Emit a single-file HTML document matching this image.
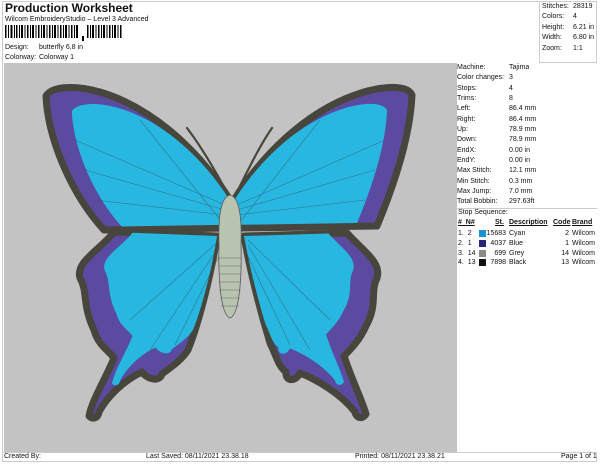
<!DOCTYPE html><html><head><style>
body{margin:0;width:600px;height:464px;background:#fff;font-family:"Liberation Sans",sans-serif;color:#111;position:relative;overflow:hidden}
.a{position:absolute;font-size:7px;white-space:nowrap}
.r{position:absolute;left:0;font-size:7px;white-space:nowrap}
</style></head><body>
<div style="position:absolute;left:2px;top:1px;width:595px;height:461px;border:1px solid #ccc;box-sizing:border-box"></div>
<div style="position:absolute;left:539px;top:1px;width:58px;height:62px;border-left:1px solid #ccc;border-bottom:1px solid #ccc;box-sizing:border-box"></div>
<div class="a" style="left:5px;top:1px;font-size:12px;font-weight:bold">Production Worksheet</div>
<div class="a" style="left:5px;top:16px">Wilcom EmbroideryStudio – Level 3 Advanced</div>
<svg style="position:absolute;left:5px;top:25px" width="118" height="18">
<g fill="#000">
<rect x="0" y="0" width="1.5" height="13"/><rect x="3" y="0" width="1" height="13"/><rect x="5.5" y="0" width="2" height="13"/><rect x="9" y="0" width="1" height="13"/><rect x="11" y="0" width="1.5" height="13"/><rect x="14" y="0" width="1" height="13"/><rect x="16" y="0" width="2" height="13"/><rect x="19.5" y="0" width="1" height="13"/><rect x="22" y="0" width="1.5" height="13"/><rect x="25" y="0" width="1" height="13"/><rect x="27" y="0" width="2" height="13"/><rect x="30.5" y="0" width="1" height="13"/><rect x="33" y="0" width="1.5" height="13"/><rect x="36" y="0" width="1" height="13"/><rect x="38" y="0" width="2" height="13"/><rect x="41.5" y="0" width="1" height="13"/><rect x="44" y="0" width="1.5" height="13"/><rect x="47" y="0" width="1" height="13"/><rect x="49" y="0" width="2" height="13"/><rect x="52.5" y="0" width="1" height="13"/><rect x="55" y="0" width="1.5" height="13"/><rect x="58" y="0" width="1" height="13"/><rect x="60" y="0" width="2" height="13"/><rect x="63.5" y="0" width="1" height="13"/><rect x="66" y="0" width="1.5" height="13"/><rect x="69" y="0" width="1" height="13"/><rect x="71" y="0" width="2" height="13"/>
<rect x="77" y="11" width="2" height="5"/>
<rect x="82" y="0" width="1.5" height="13"/><rect x="85" y="0" width="1" height="13"/><rect x="87" y="0" width="2" height="13"/><rect x="90.5" y="0" width="1" height="13"/><rect x="93" y="0" width="1.5" height="13"/><rect x="96" y="0" width="1" height="13"/><rect x="98" y="0" width="2" height="13"/><rect x="101.5" y="0" width="1" height="13"/><rect x="104" y="0" width="1.5" height="13"/><rect x="107" y="0" width="1" height="13"/><rect x="109" y="0" width="2" height="13"/><rect x="112.5" y="0" width="1" height="13"/><rect x="115" y="0" width="1.5" height="13"/>
</g></svg>
<div class="a" style="left:5px;top:44px">Design:</div><div class="a" style="left:39px;top:44px">butterfly 6,8 in</div>
<div class="a" style="left:5px;top:54px">Colorway:</div><div class="a" style="left:39px;top:54px">Colorway 1</div>
<div class="a" style="left:542px;top:2px;line-height:10.4px">Stitches:<br>Colors:<br>Height:<br>Width:<br>Zoom:</div>
<div class="a" style="left:573px;top:2px;line-height:10.4px">28319<br>4<br>6.21 in<br>6.80 in<br>1:1</div>

<div style="position:absolute;left:4px;top:63px;width:453px;height:389px;background:#c3c3c3"></div>
<svg style="position:absolute;left:0;top:0" width="460" height="460">
<defs>
<path id="lu" d="M230,200 C205,160 160,110 100,92 C75,85 52,86 46,96 C48,140 72,195 104,230 L229,228 Z"/>
<path id="ll" d="M217,236 L114,232 C100,250 75,262 80,278 C88,292 82,305 94,330 C98,345 108,350 114,358 C105,380 92,400 89,416 C93,420 98,418 99,412 C108,395 125,380 142,372 C148,380 160,382 162,374 C170,368 182,360 188,350 C200,320 212,270 217,236 Z"/>
<path id="ru" d="M234,200 C259,160 304,110 364,92 C389,85 408,86 412,95 C410,140 392,190 377,226 L242,228 Z"/>
<path id="rl" d="M244,236 L347,233 C362,250 382,262 377,278 C370,292 378,305 366,326 C360,340 350,350 344,356 C352,380 362,400 366,414 C362,420 356,418 355,412 C342,395 318,380 300,373 C296,382 285,382 286,372 C278,366 276,355 270,343 C260,310 250,270 244,236 Z"/>
</defs>
<g stroke="#47463d" stroke-width="7" stroke-linejoin="round" fill="#5a4aa0">
<use href="#lu"/><use href="#ll"/><use href="#ru"/><use href="#rl"/>
</g>
<g fill="#27b7e0">
<use href="#lu" transform="translate(230,205) scale(0.86) translate(-230,-205)"/>
<use href="#ll" transform="translate(217,236) scale(0.82) translate(-217,-236)"/>
<use href="#ru" transform="translate(234,205) scale(0.86) translate(-234,-205)"/>
<use href="#rl" transform="translate(244,236) scale(0.82) translate(-244,-236)"/>
</g>
<g stroke="#3a4a55" stroke-width="0.6" fill="none" opacity="0.6">
<path d="M225,205 L75,140 M225,210 L85,170 M225,215 L95,200 M222,222 L140,120 M220,240 L130,320 M220,245 L150,350 M222,250 L175,345 M248,240 L330,320 M248,245 L310,350 M245,250 L290,345 M237,205 L385,140 M237,210 L375,170 M237,215 L365,200 M240,222 L320,120"/>
</g>
<g stroke="#47463d" stroke-width="2.2" fill="none" stroke-linecap="round">
<path d="M229,196 C215,170 200,145 187,128"/><path d="M235,196 C248,170 260,145 272,128"/>
</g>
<path d="M230,195 C221,197 218,215 219,245 C218,280 221,315 230,318 C239,315 242,280 241,245 C242,215 239,197 230,195 Z" fill="#b8c4b0" stroke="#555" stroke-width="0.8"/>
<g stroke="#666" stroke-width="0.6"><path d="M219,258 H241 M219,266 H241 M219,274 H241 M219,282 H241 M219,290 H241 M220,298 H240 M221,306 H239"/></g>
</svg>

<div style="position:absolute;left:457px;top:63px;width:140px;height:389px;background:#fff">
<div style="position:absolute;left:0;top:0;line-height:10.35px" class="r">Machine:<br>Color changes:<br>Stops:<br>Trims:<br>Left:<br>Right:<br>Up:<br>Down:<br>EndX:<br>EndY:<br>Max Stitch:<br>Min Stitch:<br>Max Jump:<br>Total Bobbin:</div>
<div style="position:absolute;left:52px;top:0;line-height:10.35px" class="r">Tajima<br>3<br>4<br>8<br>86.4 mm<br>86.4 mm<br>78.9 mm<br>78.9 mm<br>0.00 in<br>0.00 in<br>12.1 mm<br>0.3 mm<br>7.0 mm<br>297.63ft</div>
<div style="position:absolute;left:0;top:145px;width:140px;border-top:1px solid #ccc"></div>
<div class="r" style="top:146px;left:1px">Stop Sequence:</div>
<div class="r" style="top:156px;left:1px;font-weight:bold;text-decoration:underline">#&nbsp;&nbsp;N#</div>
<div class="r" style="top:156px;left:38px;font-weight:bold;text-decoration:underline">St.</div>
<div class="r" style="top:156px;left:52px;font-weight:bold;text-decoration:underline">Description</div>
<div class="r" style="top:156px;left:96px;font-weight:bold;text-decoration:underline">Code</div>
<div class="r" style="top:156px;left:115px;font-weight:bold;text-decoration:underline">Brand</div>
<div class="r" style="top:166px;left:1px;line-height:9.8px">1.&nbsp;&nbsp;2<br>2.&nbsp;&nbsp;1<br>3.&nbsp;&nbsp;14<br>4.&nbsp;&nbsp;13</div>
<div style="position:absolute;left:22px;top:167px;width:7px;height:7px;background:#1e90d8"></div>
<div style="position:absolute;left:22px;top:177px;width:7px;height:7px;background:#2a237a"></div>
<div style="position:absolute;left:22px;top:187px;width:7px;height:7px;background:#8a8a8a"></div>
<div style="position:absolute;left:22px;top:196px;width:7px;height:7px;background:#111"></div>
<div class="r" style="top:166px;left:28px;width:21px;text-align:right;line-height:9.8px">15683<br>4037<br>699<br>7898</div>
<div class="r" style="top:166px;left:52px;line-height:9.8px">Cyan<br>Blue<br>Grey<br>Black</div>
<div class="r" style="top:166px;left:92px;width:20px;text-align:right;line-height:9.8px">2<br>1<br>14<br>13</div>
<div class="r" style="top:166px;left:115px;line-height:9.8px">Wilcom<br>Wilcom<br>Wilcom<br>Wilcom</div>
</div>
<div style="position:absolute;left:3px;top:452px;width:594px;border-top:1px solid #ccc"></div>
<div class="a" style="left:4px;top:453px">Created By:</div>
<div class="a" style="left:146px;top:453px">Last Saved: 08/11/2021 23.38.18</div>
<div class="a" style="left:355px;top:453px">Printed: 08/11/2021 23.38.21</div>
<div class="a" style="left:561px;top:453px">Page 1 of 1</div>
</body></html>
